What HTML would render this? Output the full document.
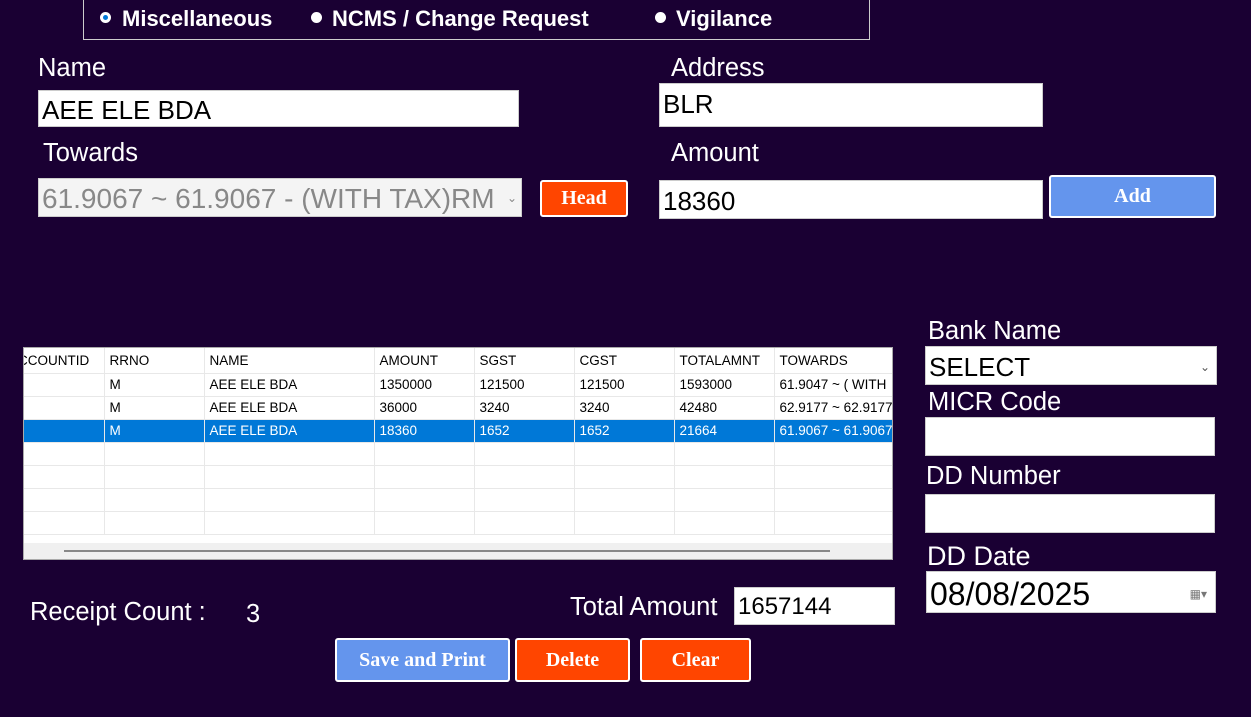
<!DOCTYPE html>
<html><head><style>
body{margin:0;width:1251px;height:717px;background:#1a0033;font-family:"Liberation Sans",sans-serif;position:relative;overflow:hidden;color:#fff}
.a{position:absolute}
.lbl{position:absolute;font-size:25.5px;color:#fff;line-height:28px}
.inp{position:absolute;background:#fff;color:#000;box-sizing:border-box;border:1px solid #ccc;font-size:26px;padding-left:3px}
.btn{position:absolute;box-sizing:border-box;border:2px solid #fff;border-radius:3px;color:#fff;font-family:"Liberation Serif",serif;font-weight:bold;font-size:20px;text-align:center}
.or{background:#ff4500}.bl{background:#6495ed}
.rad{position:absolute;width:11px;height:11px;border-radius:50%;background:#fff;top:12px}
.rt{position:absolute;top:6px;font-size:22px;font-weight:bold;color:#fff}
table{border-collapse:collapse;font-size:13.5px;color:#000}
td{height:23px;border-right:1px solid #e8e8e8;border-bottom:1px solid #e8e8e8;padding:0 0 0 5px;white-space:nowrap;overflow:hidden;box-sizing:border-box}
tr.s td{background:#0078d7;color:#fff}
</style></head><body>
<div class="a" style="left:83px;top:-1px;width:785px;height:39px;border:1px solid #ccc"></div>
<div class="rad" style="left:100px;background:#fff"><div style="position:absolute;left:3px;top:3px;width:5px;height:5px;border-radius:50%;background:#0078d7"></div></div>
<div class="rt" style="left:122px">Miscellaneous</div>
<div class="rad" style="left:311px"></div><div class="rt" style="left:332px">NCMS / Change Request</div>
<div class="rad" style="left:655px"></div><div class="rt" style="left:676px">Vigilance</div>

<div class="lbl" style="left:38px;top:54px">Name</div>
<div class="inp" style="left:38px;top:90px;width:481px;height:37px;line-height:39px">AEE ELE BDA</div>
<div class="lbl" style="left:671px;top:54px">Address</div>
<div class="inp" style="left:659px;top:83px;width:384px;height:44px;line-height:40px">BLR</div>
<div class="lbl" style="left:43px;top:139px">Towards</div>
<div class="inp" style="left:38px;top:178px;width:484px;height:39px;line-height:39px;color:#888;background:#f4f4f4;overflow:hidden;white-space:nowrap;font-size:28px">61.9067 ~ 61.9067 - (WITH TAX)RM<span style="position:absolute;right:4px;font-size:12px;background:#f4f4f4">⌄</span></div>
<div class="btn or" style="left:540px;top:180px;width:88px;height:37px;line-height:33px">Head</div>
<div class="lbl" style="left:671px;top:139px">Amount</div>
<div class="inp" style="left:659px;top:180px;width:384px;height:39px;line-height:40px">18360</div>
<div class="btn bl" style="left:1049px;top:175px;width:167px;height:43px;line-height:39px">Add</div>

<div class="a" style="left:23px;top:347px;width:870px;height:213px;background:#fff;border:1px solid #aaa;box-sizing:border-box;overflow:hidden">
<table style="position:absolute;left:-20px;top:0;table-layout:fixed;width:900px">
<colgroup><col style="width:100px"><col style="width:100px"><col style="width:170px"><col style="width:100px"><col style="width:100px"><col style="width:100px"><col style="width:100px"><col style="width:130px"></colgroup>
<tr style="height:25px"><td style="text-align:right;padding-right:15px;height:25px">ACCOUNTID</td><td>RRNO</td><td>NAME</td><td>AMOUNT</td><td>SGST</td><td>CGST</td><td>TOTALAMNT</td><td>TOWARDS</td></tr>
<tr><td></td><td>M</td><td>AEE ELE BDA</td><td>1350000</td><td>121500</td><td>121500</td><td>1593000</td><td>61.9047 ~ ( WITH</td></tr>
<tr><td></td><td>M</td><td>AEE ELE BDA</td><td>36000</td><td>3240</td><td>3240</td><td>42480</td><td>62.9177 ~ 62.9177</td></tr>
<tr class="s"><td></td><td>M</td><td>AEE ELE BDA</td><td>18360</td><td>1652</td><td>1652</td><td>21664</td><td>61.9067 ~ 61.9067</td></tr>
<tr><td></td><td></td><td></td><td></td><td></td><td></td><td></td><td></td></tr>
<tr><td></td><td></td><td></td><td></td><td></td><td></td><td></td><td></td></tr>
<tr><td></td><td></td><td></td><td></td><td></td><td></td><td></td><td></td></tr>
<tr><td></td><td></td><td></td><td></td><td></td><td></td><td></td><td></td></tr>
</table>
<div class="a" style="left:0;top:195px;width:870px;height:18px;background:#f0f0f0"><div class="a" style="left:40px;top:7px;width:766px;height:2px;background:#888"></div></div>
</div>

<div class="lbl" style="left:928px;top:317px">Bank Name</div>
<div class="inp" style="left:925px;top:346px;width:292px;height:39px;line-height:40px">SELECT<span style="position:absolute;right:6px;font-size:12px;color:#555">⌄</span></div>
<div class="lbl" style="left:928px;top:388px">MICR Code</div>
<div class="inp" style="left:925px;top:417px;width:290px;height:39px"></div>
<div class="lbl" style="left:926px;top:462px">DD Number</div>
<div class="inp" style="left:925px;top:494px;width:290px;height:39px"></div>
<div class="lbl" style="left:927px;top:542px;font-size:27px">DD Date</div>
<div class="inp" style="left:926px;top:571px;width:290px;height:42px;line-height:44px;font-size:32px">08/08/2025<span style="position:absolute;right:8px;top:0;font-size:12px;color:#777">▦▾</span></div>

<div class="lbl" style="left:30px;top:598px">Receipt Count :</div>
<div class="lbl" style="left:246px;top:600px">3</div>
<div class="lbl" style="left:570px;top:593px">Total Amount</div>
<div class="inp" style="left:734px;top:587px;width:161px;height:38px;line-height:38px;font-size:24px">1657144</div>

<div class="btn bl" style="left:335px;top:638px;width:175px;height:44px;line-height:40px">Save and Print</div>
<div class="btn or" style="left:515px;top:638px;width:115px;height:44px;line-height:40px">Delete</div>
<div class="btn or" style="left:640px;top:638px;width:111px;height:44px;line-height:40px">Clear</div>
</body></html>
